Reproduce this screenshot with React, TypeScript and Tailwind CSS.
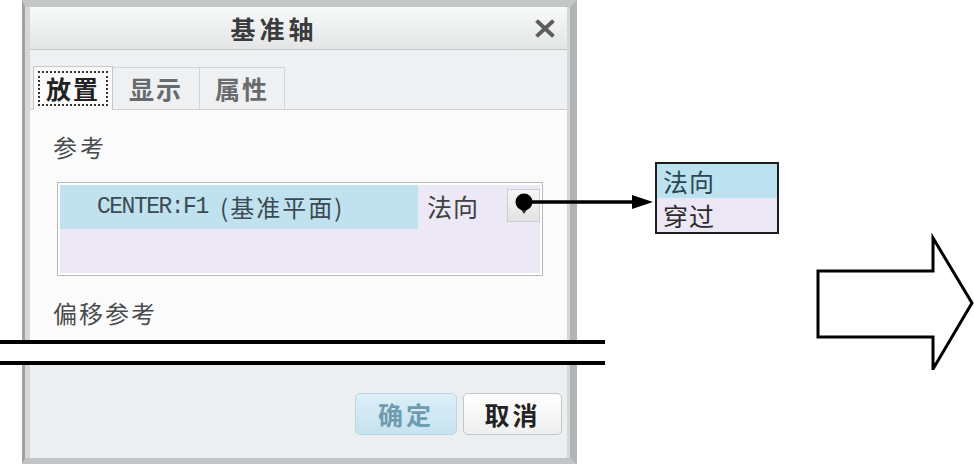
import React from "react";

const cjk = { fontFamily: '"Noto Sans CJK SC", "Noto Sans", sans-serif' };
const mono = { fontFamily: '"Liberation Mono", "Noto Sans CJK SC", monospace' };

const CloseIcon = () => (
  <svg width="20" height="19" viewBox="0 0 20 19">
    <path d="M3 3 L17 16 M17 3 L3 16" stroke="#5b5d5f" strokeWidth="4" strokeLinecap="square" />
  </svg>
);

const BigArrow = () => (
  <svg width="164" height="140" viewBox="0 0 164 140">
    <polygon
      points="8,41 123,41 123,8 162,73 123,139 123,107 8,107"
      fill="none"
      stroke="#000"
      strokeWidth="3"
      strokeLinejoin="miter"
    />
  </svg>
);

const Connector = () => (
  <svg width="150" height="26" viewBox="0 0 150 26">
    <circle cx="14" cy="12" r="8.5" fill="#000" />
    <line x1="14" y1="12" x2="126" y2="12" stroke="#000" strokeWidth="3.5" />
    <polygon points="122,5 143,12 122,19" fill="#000" />
  </svg>
);

export default function App() {
  return (
    <div className="relative w-[974px] h-[464px] bg-white overflow-hidden" style={cjk}>
      <div className="flex flex-col w-[605px]">
        {/* dialog top */}
        <div className="ml-[22px] w-[555px] h-[340px] flex flex-col bg-[#d5d7d8] border-l-[3px] border-l-[#a0a2a4] border-r-[7px] border-r-[#b1b3b5] border-t-[7px] border-t-[#c4c6c7] pl-[5px] pr-[3px]">
          {/* title */}
          <div className="h-[43px] flex items-center bg-gradient-to-b from-[#f8f9f9] to-[#e3e5e6] border-b border-[#c6c8c9]">
            <div className="flex-1 text-center pl-[8px] text-[25px] font-bold text-[#3a3b3c] tracking-[4px] leading-none">
              基准轴
            </div>
            <div className="w-[57px] pl-[25px] flex items-center">
              <CloseIcon />
            </div>
          </div>
          {/* tabs */}
          <div className="h-[60px] flex items-end bg-[#eef0f1] pl-[3px] border-b border-[#cfd1d2]">
            <div className="w-[80px] h-[44px] -mb-px bg-[#fbfbfb] border border-b-0 border-[#c4c6c7] pt-[4px] px-[4px]">
              <div className="h-[35px] border-2 border-dotted border-[#333] flex items-center justify-center text-[25px] font-bold text-[#222] tracking-[2px] leading-none">
                放置
              </div>
            </div>
            <div className="w-[87px] h-[42px] border-t border-r border-[#d2d4d5] flex items-center justify-center text-[25px] font-bold text-[#686b6d] tracking-[2px] leading-none">
              显示
            </div>
            <div className="w-[85px] h-[42px] border-t border-r border-[#d2d4d5] flex items-center justify-center text-[25px] font-bold text-[#686b6d] tracking-[2px] leading-none">
              属性
            </div>
          </div>
          {/* content */}
          <div className="flex-1 bg-[#fbfbfb] pl-[23px] pr-[22px] flex flex-col">
            <div className="mt-[25px] text-[24px] leading-[24px] text-[#4a4b4c] tracking-[3px]">参考</div>
            <div className="mt-[23px] ml-[4px] w-[486px] h-[94px] border border-[#b5b7b9] p-[2px] bg-white">
              <div className="h-full bg-[#ede8f5] flex flex-col">
                <div className="h-[44px] flex">
                  <div className="w-[358px] bg-[#bfe2ee] pl-[37px] flex items-center text-[#3b4a53] whitespace-pre">
                    <span className="text-[23px] tracking-[-1.5px]" style={mono}>CENTER:F1 </span>
                    <span className="text-[24px] tracking-[2px]" style={cjk}>(基准平面)</span>
                  </div>
                  <div className="pl-[9px] flex items-center text-[25px] text-[#404142] tracking-[1px]">法向</div>
                  <div className="ml-auto mt-[4px] w-[33px] h-[33px] border border-[#c9cbcc] bg-gradient-to-b from-[#f6f6f6] to-[#e2e3e4] flex items-center justify-center pt-[10px]">
                    <div className="w-0 h-0 border-l-[4px] border-r-[4px] border-t-[6px] border-l-transparent border-r-transparent border-t-[#333]" />
                  </div>
                </div>
              </div>
            </div>
            <div className="mt-[25px] text-[24px] leading-[24px] text-[#4a4b4c] tracking-[2px]">偏移参考</div>
          </div>
        </div>

        {/* break lines */}
        <div className="h-[4px] bg-black" />
        <div className="h-[17px]" />
        <div className="h-[4px] bg-black" />

        {/* dialog bottom */}
        <div className="ml-[22px] w-[555px] h-[99px] flex bg-[#d5d7d8] border-l-[3px] border-l-[#a0a2a4] border-r-[7px] border-r-[#b1b3b5] border-b-[6px] border-b-[#c2c4c6] pl-[5px] pr-[3px]">
          <div className="flex-1 bg-[#eceff0] flex justify-end items-start pt-[28px] pr-[5px] gap-[6px]">
            <div className="w-[102px] h-[42px] rounded-[5px] border border-[#bcd6e2] bg-gradient-to-b from-[#dbeff8] to-[#c7e3ef] flex items-center justify-center text-[25px] font-bold text-[#6e9bb0] tracking-[3px] leading-none">
              确定
            </div>
            <div className="w-[99px] h-[42px] rounded-[5px] border border-[#c3c5c7] bg-gradient-to-b from-[#ffffff] to-[#eeeff0] flex items-center justify-center text-[25px] font-bold text-[#222] tracking-[3px] leading-none">
              取消
            </div>
          </div>
        </div>
      </div>

      {/* annotations */}
      <div className="absolute left-[510px] top-[190px]">
        <Connector />
      </div>
      <div className="absolute left-[655px] top-[162px] w-[124px] h-[72px] border-2 border-[#1e1e1e] flex flex-col">
        <div className="h-[34px] bg-[#bbe2ee] pl-[6px] flex items-center text-[25px] text-[#2c4652] tracking-[1px] leading-none">
          法向
        </div>
        <div className="flex-1 bg-[#ebe7f4] pl-[6px] flex items-center text-[25px] text-[#2b2b2b] tracking-[1px] leading-none">
          穿过
        </div>
      </div>
      <div className="absolute left-[810px] top-[230px]">
        <BigArrow />
      </div>
    </div>
  );
}
